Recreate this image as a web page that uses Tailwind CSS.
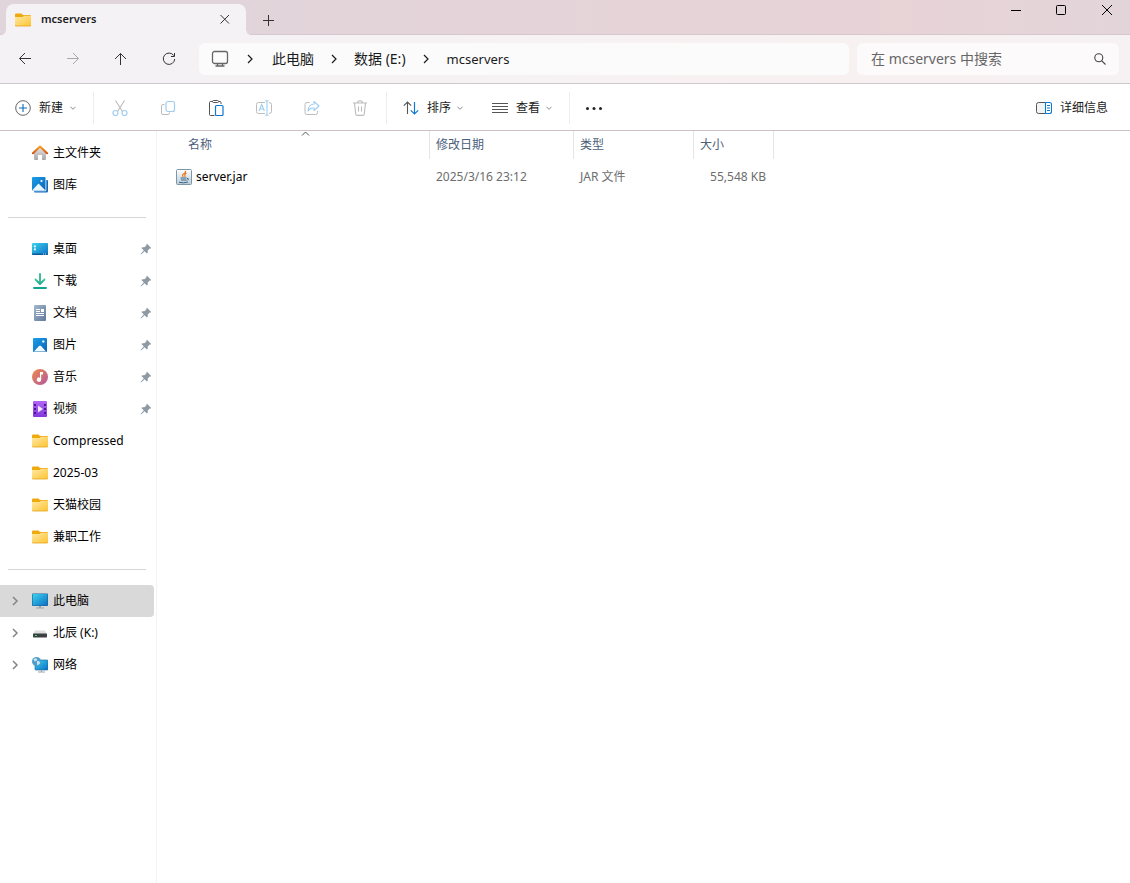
<!DOCTYPE html>
<html lang="zh-CN">
<head>
<meta charset="utf-8">
<meta name="viewport" content="width=device-width, initial-scale=1">
<title>mcservers</title>
<script src="https://cdn.jsdelivr.net/npm/@tailwindcss/browser@4"></script>
</head>
<body class="flex h-screen flex-col overflow-hidden bg-white font-['Noto_Sans','Noto_Sans_CJK_SC',sans-serif] text-xs text-black">

<svg class="absolute size-0" aria-hidden="true">
  <defs>
    <linearGradient id="gFolder" x1="0" y1="0" x2="1" y2="1"><stop offset="0" stop-color="#ffe9a8"/><stop offset="1" stop-color="#fdc52f"/></linearGradient>
    <linearGradient id="gBlue" x1="0" y1="0" x2="1" y2="1"><stop offset="0" stop-color="#1ba0ea"/><stop offset="1" stop-color="#0a62b5"/></linearGradient>
    <linearGradient id="gCyan" x1="0" y1="0" x2="1" y2="1"><stop offset="0" stop-color="#3ad3ee"/><stop offset="1" stop-color="#0d6fc4"/></linearGradient>
    <linearGradient id="gHome" x1="0" y1="0" x2="0" y2="1"><stop offset="0" stop-color="#e6e4e4"/><stop offset="1" stop-color="#a9a7a8"/></linearGradient>
    <linearGradient id="gRoof" x1="0" y1="0" x2="0" y2="1"><stop offset="0" stop-color="#f7a01e"/><stop offset="1" stop-color="#d9500f"/></linearGradient>
    <linearGradient id="gDown" x1="0" y1="0" x2="0" y2="1"><stop offset="0" stop-color="#3cc98a"/><stop offset="1" stop-color="#0e9e96"/></linearGradient>
    <linearGradient id="gDoc" x1="0" y1="0" x2="1" y2="1"><stop offset="0" stop-color="#a3b8cc"/><stop offset="1" stop-color="#60799b"/></linearGradient>
    <linearGradient id="gMusic" x1="0" y1="0" x2="1" y2="1"><stop offset="0" stop-color="#f08a4b"/><stop offset="1" stop-color="#b3589c"/></linearGradient>
    <linearGradient id="gVideo" x1="0" y1="0" x2="0" y2="1"><stop offset="0" stop-color="#b265f5"/><stop offset="1" stop-color="#8238dc"/></linearGradient>
    <linearGradient id="gJar" x1="0" y1="0" x2="0" y2="1"><stop offset="0" stop-color="#ffffff"/><stop offset="1" stop-color="#b9cbd7"/></linearGradient>
  </defs>
  <symbol id="folder" viewBox="0 0 16 16"><path d="M0 2.500Q0 1.500 1 1.500H6.500L8 3H15Q16 3 16 4V8H0Z" fill="#f0a90c"/><path d="M0 5H7.500L9 3.800H16V13Q16 14 15 14H1Q0 14 0 13Z" fill="url(#gFolder)"/><path d="M0 13Q0 14 1 14H15Q16 14 16 13" fill="none" stroke="#e9a21c" stroke-width=".8"/></symbol>
  <symbol id="home" viewBox="0 0 16 16"><path d="M2 7 8 2 14 7V14Q14 15 13 15H10V10H6V15H3Q2 15 2 14Z" fill="url(#gHome)"/><path d="M.9 8.300 8 1.600 15.100 8.300" fill="none" stroke="url(#gRoof)" stroke-width="2" stroke-linecap="round" stroke-linejoin="round"/></symbol>
  <symbol id="gallery" viewBox="0 0 16 16"><path d="M3 3H15Q16 3 16 4V14Q16 15.500 14.500 15.500H3Q2 15.500 2 14.500Z" fill="#1268bb"/><rect width="14.300" height="14.300" rx="1" fill="#fff"/><path d="M0 1Q0 0 1 0H12.500Q13.500 0 13.500 1V13.500H0Z" fill="url(#gBlue)"/><path d="M0 13.500 6.500 6.500 13.500 13.500Z" fill="#e8f6ff"/><circle cx="9.500" cy="4" r="1.100" fill="#fff"/></symbol>
  <symbol id="desktop" viewBox="0 0 16 16"><rect y="2" width="16" height="12" rx="1" fill="url(#gCyan)"/><path d="M2 4.500H3.800V6.300H2ZM2 7.500H3.800V9.300H2Z" fill="#fff"/><path d="M0 12.500H16V13Q16 14 15 14H1Q0 14 0 13Z" fill="#0b5a9c"/><path d="M11 13H12M13 13H14" stroke="#fff" stroke-width=".8"/></symbol>
  <symbol id="download" viewBox="0 0 16 16"><path d="M3.500 6.500 8 11 12.500 6.500" fill="none" stroke="url(#gDown)" stroke-width="1.800" stroke-linecap="round"/><path d="M8 1V10" stroke="#2bb48e" stroke-width="1.800" stroke-linecap="round"/><path d="M2 15H14" stroke="#12a294" stroke-width="1.800" stroke-linecap="round"/></symbol>
  <symbol id="document" viewBox="0 0 16 16"><rect x="2" width="12" height="16" rx="1" fill="url(#gDoc)"/><path d="M4 4.500H8M4 6.500H8M4 8.500H12M4 10.500H12" stroke="#fff" stroke-width="1.100"/><rect x="9" y="4" width="3" height="3" fill="#fff"/></symbol>
  <symbol id="picture" viewBox="0 0 16 16"><rect x="1" y="1" width="14" height="14" rx="1" fill="url(#gBlue)"/><path d="M2 14.500 7 9Q8 8 9 9L14 14.500Z" fill="#f2faff"/><circle cx="11.300" cy="4.500" r="1.200" fill="#d8f2ff"/></symbol>
  <symbol id="music" viewBox="0 0 16 16"><circle cx="8" cy="8" r="8" fill="url(#gMusic)"/><path d="M8 3H11V5.500H9.200V10.500A2.200 2.200 0 1 1 8 8.700Z" fill="#fff"/></symbol>
  <symbol id="video" viewBox="0 0 16 16"><rect x="1" width="14" height="16" rx="1" fill="url(#gVideo)"/><path d="M2 3H4V5H2ZM2 7H4V9H2ZM2 11H4V13H2ZM12 3H14V5H12ZM12 7H14V9H12ZM12 11H14V13H12Z" fill="#4c1795"/><path d="M6 4.500 11 8 6 11.500Z" fill="#f1e6ff"/></symbol>
  <symbol id="pc" viewBox="0 0 16 16"><rect width="16" height="12.500" y="0.500" rx="1" fill="#1a6097"/><rect x=".6" y="1.100" width="14.800" height="11.300" rx=".4" fill="url(#gCyan)"/><path d="M7 13H9V14.500H12V15.500H4V14.500H7Z" fill="#9ba4ab"/></symbol>
  <symbol id="drive" viewBox="0 0 16 16"><path d="M3 5.500H13L15 9H1Z" fill="#dddfe0"/><rect x="1" y="8.500" width="14" height="4" rx=".7" fill="#3c4043"/><path d="M3 10.500H5" stroke="#38e36b" stroke-width="1.200"/></symbol>
  <symbol id="network" viewBox="0 0 16 16"><rect x="3" y="3" width="13" height="10" rx=".8" fill="url(#gCyan)" stroke="#166294" stroke-width=".6"/><path d="M9 13H10V14.500H13V15.500H6V14.500H9Z" fill="#9ba4ab"/><circle cx="4.500" cy="4.500" r="4.500" fill="#4f9dc9"/><path d="M1.500 2Q4 .5 5 2T2.500 4.500ZM5 4Q8 3.500 8 5.500T5 8Z" fill="#c5e6f1"/></symbol>
  <symbol id="jar" viewBox="0 0 16 16"><rect x=".5" y=".5" width="15" height="15" rx="1" fill="url(#gJar)" stroke="#7d96a8"/><path d="M9.500 1.800Q10 3.800 7.800 4.800T7.200 8M10.500 4.200Q7.800 5.500 9.200 8" fill="none" stroke="#ee7a1f" stroke-width="1.200"/><path d="M4.500 9H10.500M5 11H10.500M3 13.300Q7.500 14.500 12 13M11 9.300Q14 9.500 11.300 11.300" fill="none" stroke="#3d6587" stroke-width="1"/></symbol>
  <symbol id="pin" viewBox="0 0 12 12"><path d="M7 .8 11.200 5 10.200 5.800 9.600 5.600 7.800 7.600 7.700 9.700 6.900 10.500 4.600 8.200 1.300 11.300 .7 11.300 .7 10.700 3.800 7.400 1.500 5.100 2.300 4.300 4.400 4.200 6.400 2.400 6.200 1.800Z" fill="#8d99a3"/></symbol>
  <symbol id="chevR" viewBox="0 0 8 12"><path d="M2 2 6 6 2 10" fill="none" stroke="currentColor" stroke-width="1.200"/></symbol>
  <symbol id="chevTree" viewBox="0 0 8 12"><path d="M2 2 6 6 2 10" fill="none" stroke="#858585" stroke-width="1.500"/></symbol>
  <symbol id="chevD" viewBox="0 0 8 8"><path d="M1.500 2.800 4 5.300 6.500 2.800" fill="none" stroke="#8c8c8c"/></symbol>
</svg>

<!-- Title bar -->
<header class="flex h-[35px] shrink-0 items-stretch bg-linear-to-r from-[#dfd5db] via-[#e8d3d7] via-80% to-[#e2d5da] shadow-[inset_0_-1px_0_#d5c7cd]">
  <div class="relative mt-1 ml-1.5 flex w-60 items-center rounded-t-lg bg-[#f4f2f5] pr-[13px] pl-2">
    <span class="absolute bottom-0 -left-1 size-1 bg-[radial-gradient(circle_at_0_0,transparent_3px,#f4f2f5_4px)]"></span>
    <span class="absolute -right-1 bottom-0 size-1 bg-[radial-gradient(circle_at_100%_0,transparent_3px,#f4f2f5_4px)]"></span>
    <svg class="ml-px size-4"><use href="#folder"/></svg>
    <span class="ml-2.5 flex-1 text-[11px] font-semibold text-[#1b1b1b]">mcservers</span>
    <button aria-label="关闭标签页"><svg class="size-4" viewBox="0 0 16 16" fill="none" stroke="#333"><path d="M3.500 3 12 11.500M12 3 3.500 11.500"/></svg></button>
  </div>
  <button aria-label="新标签页" class="ml-3.5 flex items-center pt-1"><svg class="size-4" viewBox="0 0 16 16" stroke="#333"><path d="M3 8.500H14M8.500 3V14"/></svg></button>
  <div class="flex-1"></div>
  <div class="flex h-5 items-center">
    <button aria-label="最小化" class="flex w-[45px] justify-center"><svg class="size-3" viewBox="0 0 12 12" stroke="#000"><path d="M1 6.500H11"/></svg></button>
    <button aria-label="最大化" class="flex w-[46px] justify-center"><svg class="size-3" viewBox="0 0 12 12" fill="none" stroke="#000"><rect x="1.500" y="1.500" width="9" height="9" rx="1"/></svg></button>
    <button aria-label="关闭" class="flex w-[46px] justify-center"><svg class="size-3" viewBox="0 0 12 12" stroke="#000"><path d="M1 1 11 11M11 1 1 11"/></svg></button>
  </div>
</header>

<!-- Navigation and address -->
<div class="flex h-[49px] shrink-0 items-center border-b border-[#cfc7cb] bg-linear-to-r from-[#f4f2f5] via-[#f8f1f2] via-75% to-[#f6f1f3] pr-[11px] text-sm">
  <div class="flex w-[199px] pl-px text-[#333]">
    <button aria-label="后退" class="flex w-12 justify-center"><svg class="size-4" viewBox="0 0 16 16" fill="none" stroke="currentColor"><path d="M14 7.500H2.500M8 2 2.500 7.500 8 13"/></svg></button>
    <button aria-label="前进" class="flex w-12 justify-center text-[#aaa8aa]"><svg class="size-4" viewBox="0 0 16 16" fill="none" stroke="currentColor"><path d="M2 7.500H13.500M8 2 13.500 7.500 8 13"/></svg></button>
    <button aria-label="向上" class="flex w-12 justify-center"><svg class="size-4" viewBox="0 0 16 16" fill="none" stroke="currentColor"><path d="M7.500 14V2.500M2 8 7.500 2.500 13 8"/></svg></button>
    <button aria-label="刷新" class="flex w-12 justify-center"><svg class="size-4" viewBox="0 0 16 16" fill="none" stroke="currentColor"><path d="M12.700 4.500A5.700 5.700 0 1 0 13.700 8M13.500 2V5.500H10"/></svg></button>
  </div>
  <nav aria-label="地址" class="flex h-8 flex-1 items-center rounded-md bg-[#fcfbfc] pl-3 text-[#1b1b1b]">
    <svg class="size-[18px]" viewBox="0 0 18 18" fill="none" stroke="#666" stroke-width="1.300"><rect x="1.500" y="1.500" width="15" height="12" rx="2"/><path d="M6.500 13.500V16M11.500 13.500V16M4.500 16H13.500"/></svg>
    <svg class="mx-[17px] h-3 w-2"><use href="#chevR"/></svg>
    <a href="#" class="pl-px">此电脑</a>
    <svg class="mx-4 h-3 w-2"><use href="#chevR"/></svg>
    <a href="#">数据 (E:)</a>
    <svg class="mr-[17px] ml-4 h-3 w-2"><use href="#chevR"/></svg>
    <a href="#" class="text-[13px]">mcservers</a>
  </nav>
  <label class="ml-2 flex h-8 w-[262px] items-center rounded-md bg-[#fdfafc] pr-3 pl-3.5">
    <input type="search" aria-label="搜索" placeholder="在 mcservers 中搜索" class="min-w-0 flex-1 bg-transparent outline-none placeholder:text-[#666]">
    <svg class="size-3.5" viewBox="0 0 14 14" fill="none" stroke="#444" stroke-width="1.100"><circle cx="5.800" cy="5.800" r="4"/><path d="M8.800 8.800 12.500 12.500"/></svg>
  </label>
</div>

<!-- Command bar -->
<div class="flex h-[47px] shrink-0 items-center border-b border-[#cfc0c6] pt-0.5 pr-[22px] pl-[15px] text-[#1b1b1b]">
  <button class="flex items-center gap-2"><svg class="size-4" viewBox="0 0 16 16" fill="none"><circle cx="8" cy="8" r="7.300" stroke="#666"/><path d="M4 8H12M8 4V12" stroke="#0f6cbd" stroke-width="1.100"/></svg>新建<svg class="-ml-0.5 size-2"><use href="#chevD"/></svg></button>
  <span class="mr-[2px] ml-4 h-8 w-px bg-[#ededed]"></span>
  <button disabled aria-label="剪切" class="flex w-12 justify-center"><svg class="size-4" viewBox="0 0 16 16" fill="none"><path d="M3.500 .5 10.500 11.500M12.500 .5 5.500 11.500" stroke="#bcbcbc" stroke-width="1.100"/><circle cx="3.500" cy="13" r="2.500" stroke="#9fcdf0" stroke-width="1.200"/><circle cx="12.500" cy="13" r="2.500" stroke="#9fcdf0" stroke-width="1.200"/></svg></button>
  <button disabled aria-label="复制" class="flex w-12 justify-center"><svg class="size-4" viewBox="0 0 16 16" fill="none"><path d="M4.500 4.500H3Q1.500 4.500 1.500 6V13Q1.500 14.500 3 14.500H8Q9.500 14.500 9.500 12.500" stroke="#bcbcbc"/><rect x="6" y="1.500" width="8.500" height="10" rx="2" stroke="#9fcdf0" stroke-width="1.200"/></svg></button>
  <button aria-label="粘贴" class="flex w-12 justify-center"><svg class="size-4" viewBox="0 0 16 16" fill="none"><path d="M6.500 15.500H2.500Q1.500 15.500 1.500 14.500V2.500Q1.500 1.500 2.500 1.500H4.500M10.500 1.500H12Q13 1.500 13 2.500V4" stroke="#555"/><rect x="4.500" y=".5" width="6" height="2" rx="1" stroke="#555"/><rect x="7.500" y="5.500" width="7.500" height="10" rx="1" stroke="#0f78d0" stroke-width="1.200"/></svg></button>
  <button disabled aria-label="重命名" class="flex w-12 justify-center"><svg class="size-4" viewBox="0 0 16 16" fill="none"><path d="M9 2.500H2.500Q.5 2.500 .5 4.500V11.500Q.5 13.500 2.500 13.500H9M13 2.500Q15.500 2.500 15.500 4.500V11.500Q15.500 13.500 13 13.500" stroke="#bcbcbc"/><path d="M3 11 5.700 4.500 8.400 11M4 9H7.500M11 .8V15.200M9.300 .7H12.700M9.300 15.300H12.700" stroke="#9fcdf0" stroke-width="1.100"/></svg></button>
  <button disabled aria-label="共享" class="flex w-12 justify-center"><svg class="size-4" viewBox="0 0 16 16" fill="none"><path d="M5.500 2.500H3Q1 2.500 1 4.500V12.500Q1 14.500 3 14.500H11.500Q13.500 14.500 13.500 12.500V11" stroke="#bcbcbc"/><path d="M10 1.500 15 6 10 10.500V8Q6 7.500 4 11Q4.500 4.500 10 4Z" stroke="#9fcdf0" stroke-width="1.100" stroke-linejoin="round"/></svg></button>
  <button disabled aria-label="删除" class="flex w-12 justify-center"><svg class="size-4" viewBox="0 0 16 16" fill="none" stroke="#bcbcbc" stroke-width="1.100"><path d="M1 3H15M5.500 3Q5.500 .7 8 .7T10.500 3M2.500 3 3.700 14Q3.900 15.400 5.200 15.400H10.800Q12.100 15.400 12.300 14L13.500 3M6.500 6.500V11.500M9.500 6.500V11.500"/></svg></button>
  <span class="mr-4 ml-[2px] h-8 w-px bg-[#ededed]"></span>
  <button class="flex items-center gap-2"><svg class="size-4" viewBox="0 0 16 16" fill="none"><path d="M4.500 14V2M.8 5.700 4.500 2 8.200 5.700" stroke="#555" stroke-width="1.100"/><path d="M11.500 2V14M7.800 10.300 11.500 14 15.200 10.300" stroke="#0f78d0" stroke-width="1.200"/></svg>排序<svg class="-ml-[3px] size-2"><use href="#chevD"/></svg></button>
  <button class="ml-7 flex items-center gap-2"><svg class="size-4" viewBox="0 0 16 16"><path d="M0 3.500H16M0 6.500H16M0 9.500H16M0 12.500H16" stroke="#555"/></svg>查看<svg class="-ml-[3px] size-2"><use href="#chevD"/></svg></button>
  <span class="ml-4 h-8 w-px bg-[#ededed]"></span>
  <button aria-label="更多" class="ml-4 flex"><svg class="size-4" viewBox="0 0 16 16" fill="#222"><circle cx="1.500" cy="8.500" r="1.500"/><circle cx="8" cy="8.500" r="1.500"/><circle cx="14.500" cy="8.500" r="1.500"/></svg></button>
  <button class="ml-auto flex items-center gap-2"><svg class="size-4" viewBox="0 0 16 16" fill="none"><path d="M9.500 2.500H2.500Q.5 2.500 .5 4.500V11.500Q.5 13.500 2.500 13.500H9.500" fill="#f4f4f4" stroke="#555"/><path d="M9.500 2.500H13.500Q15.500 2.500 15.500 4.500V11.500Q15.500 13.500 13.500 13.500H9.500ZM11 5.500H14M11 8H14M11 10.500H14" stroke="#0f78d0" stroke-width="1.100"/></svg>详细信息</button>
</div>

<div class="flex min-h-0 flex-1">
  <!-- Sidebar -->
  <nav aria-label="导航窗格" class="w-[157px] shrink-0 border-r border-[#f3f3f3] pt-1.5 [&>a]:flex [&>a]:h-8 [&>a]:items-center [&>a]:gap-[5px] [&>a]:pl-8">
    <a href="#"><svg class="size-4"><use href="#home"/></svg>主文件夹</a>
    <a href="#"><svg class="size-4"><use href="#gallery"/></svg>图库</a>
    <hr class="mt-4 mr-2.5 mb-[15px] ml-2 border-[#d6d6d6]">
    <a href="#"><svg class="size-4"><use href="#desktop"/></svg><span class="flex-1">桌面</span><svg class="mr-1 size-3"><use href="#pin"/></svg></a>
    <a href="#"><svg class="size-4"><use href="#download"/></svg><span class="flex-1">下载</span><svg class="mr-1 size-3"><use href="#pin"/></svg></a>
    <a href="#"><svg class="size-4"><use href="#document"/></svg><span class="flex-1">文档</span><svg class="mr-1 size-3"><use href="#pin"/></svg></a>
    <a href="#"><svg class="size-4"><use href="#picture"/></svg><span class="flex-1">图片</span><svg class="mr-1 size-3"><use href="#pin"/></svg></a>
    <a href="#"><svg class="size-4"><use href="#music"/></svg><span class="flex-1">音乐</span><svg class="mr-1 size-3"><use href="#pin"/></svg></a>
    <a href="#"><svg class="size-4"><use href="#video"/></svg><span class="flex-1">视频</span><svg class="mr-1 size-3"><use href="#pin"/></svg></a>
    <a href="#"><svg class="size-4"><use href="#folder"/></svg>Compressed</a>
    <a href="#"><svg class="size-4"><use href="#folder"/></svg>2025-03</a>
    <a href="#"><svg class="size-4"><use href="#folder"/></svg>天猫校园</a>
    <a href="#"><svg class="size-4"><use href="#folder"/></svg>兼职工作</a>
    <hr class="mt-4 mr-2.5 mb-[15px] ml-2 border-[#d6d6d6]">
    <a href="#" aria-current="page" class="mr-0.5 rounded-r-sm bg-[#d9d9d9]"><svg class="-ml-[21px] h-3 w-2"><use href="#chevTree"/></svg><svg class="ml-2 size-4"><use href="#pc"/></svg>此电脑</a>
    <a href="#"><svg class="-ml-[21px] h-3 w-2"><use href="#chevTree"/></svg><svg class="ml-2 size-4"><use href="#drive"/></svg>北辰 (K:)</a>
    <a href="#"><svg class="-ml-[21px] h-3 w-2"><use href="#chevTree"/></svg><svg class="ml-2 size-4"><use href="#network"/></svg>网络</a>
  </nav>

  <!-- File list -->
  <main class="min-w-0 flex-1">
    <table class="w-[617px] table-fixed border-separate border-spacing-0 text-left">
      <colgroup><col class="w-[273px]"><col class="w-36"><col class="w-[120px]"><col class="w-20"></colgroup>
      <thead class="text-[#4c607a]">
        <tr class="h-7">
          <th scope="col" aria-sort="ascending" class="relative border-r border-[#e5e5e5] pl-[31px] font-normal">名称<svg class="absolute top-0 left-36 h-1.5 w-2.5" viewBox="0 0 10 6" fill="none" stroke="#555"><path d="M1 4.500 4.500 1 8 4.500"/></svg></th>
          <th scope="col" class="border-r border-[#e5e5e5] pl-1.5 font-normal">修改日期</th>
          <th scope="col" class="border-r border-[#e5e5e5] pl-1.5 font-normal">类型</th>
          <th scope="col" class="border-r border-[#e5e5e5] pl-1.5 font-normal">大小</th>
        </tr>
      </thead>
      <tbody class="text-[#6d6d6d]">
        <tr class="h-9">
          <td class="pl-[19px] text-black"><div class="flex items-center gap-1"><svg class="size-4"><use href="#jar"/></svg>server.jar</div></td>
          <td class="pl-1.5">2025/3/16 23:12</td>
          <td class="pl-1.5">JAR 文件</td>
          <td class="pr-2 text-right">55,548 KB</td>
        </tr>
      </tbody>
    </table>
  </main>
</div>
</body>
</html>
